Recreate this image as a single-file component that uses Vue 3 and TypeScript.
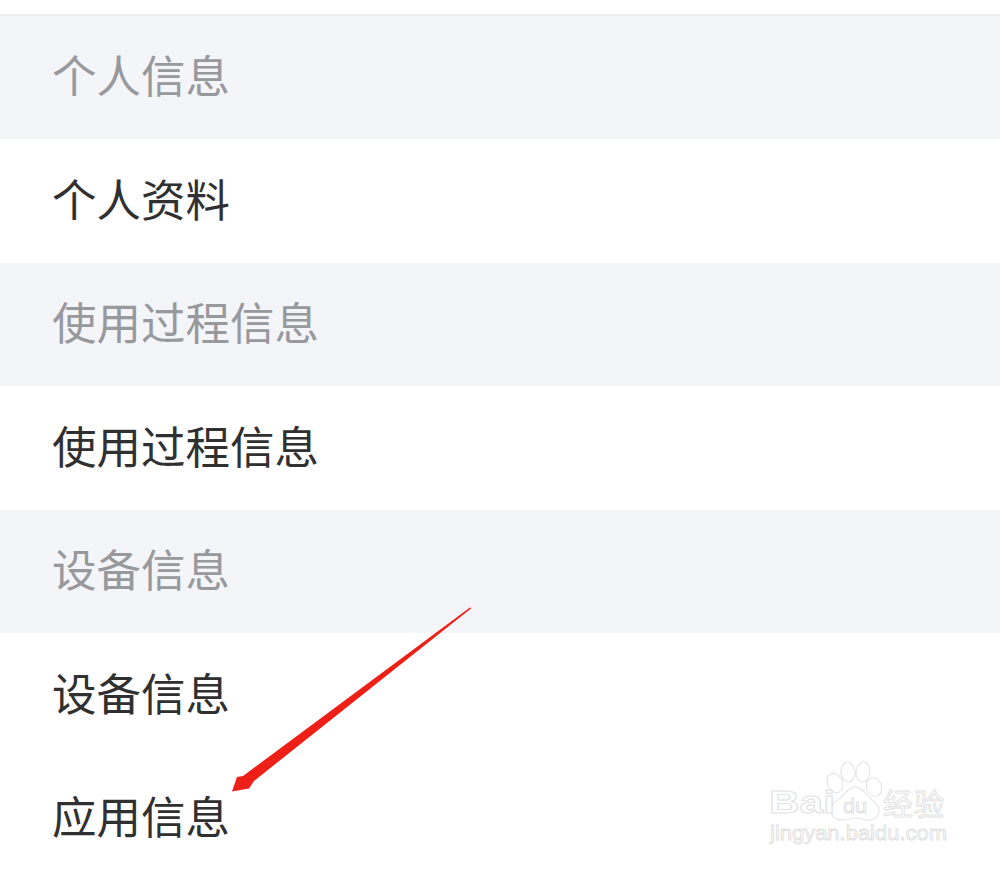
<script setup lang="ts">
interface Section { title: string; items: string[] }
const sections: Section[] = [
  { title: '个人信息', items: ['个人资料'] },
  { title: '使用过程信息', items: ['使用过程信息'] },
  { title: '设备信息', items: ['设备信息', '应用信息'] },
]
</script>

<template>
  <div class="page">
    <div class="top"></div>
    <section v-for="s in sections" :key="s.title">
      <div class="head">{{ s.title }}</div>
      <div v-for="i in s.items" :key="i" class="row">{{ i }}</div>
    </section>

    <svg class="arrow" width="1000" height="871" viewBox="0 0 1000 871">
      <polygon points="470.3,607.3 471,608.5 254,781 249,788.5 232,791.5 237,777 243,776" fill="#ee1f17" />
    </svg>

    <svg class="mark" width="210" height="110" viewBox="0 0 210 110">
      <g fill="#fff" stroke="#e4e4e4" stroke-width="1.1">
        <ellipse cx="85" cy="33" rx="7.5" ry="10" transform="rotate(-25 85 33)" />
        <ellipse cx="98" cy="22" rx="7" ry="10" transform="rotate(-5 98 22)" />
        <ellipse cx="113" cy="22" rx="7" ry="10" transform="rotate(8 113 22)" />
        <ellipse cx="124" cy="37" rx="7.5" ry="9.5" transform="rotate(-20 124 37)" />
        <path d="M105 37c7 0 10 6 15 11 6 5 9 8 9 13 0 6-5 10-12 9-5-1-8-2-12-2-5 0-8 2-13 2-7 0-11-4-11-10 0-5 4-8 9-12 6-4 8-11 15-11z" />
      </g>
      <g class="mark-text">
        <text x="19" y="63" class="bai" textLength="66" lengthAdjust="spacingAndGlyphs">Bai</text>
        <text x="93" y="63" class="du" textLength="24" lengthAdjust="spacingAndGlyphs">du</text>
        <text x="133" y="65" class="cn" textLength="61">经验</text>
        <text x="20" y="90" class="url" textLength="177" lengthAdjust="spacingAndGlyphs">jingyan.baidu.com</text>
      </g>
    </svg>
  </div>
</template>

<style>
html, body { margin: 0; background: #fff; }
</style>

<style scoped>
.page {
  position: relative;
  width: 1000px;
  height: 871px;
  overflow: hidden;
  background: #fff;
  font-family: "Noto Sans CJK SC", "Liberation Sans", sans-serif;
  font-size: 44.5px;
}
.top {
  height: 13.5px;
  border-bottom: 2px solid #eeeef0;
}
.head,
.row {
  box-sizing: border-box;
  display: flex;
  align-items: center;
  height: 123.5px;
  padding-left: 52px;
  padding-bottom: 6px;
  line-height: 1;
}
.head {
  background: #f4f5f9;
  color: #98999d;
}
.row {
  background: #fff;
  color: #303030;
}
.arrow {
  position: absolute;
  left: 0;
  top: 0;
}
.mark {
  position: absolute;
  left: 750px;
  top: 750px;
}
.mark-text text {
  fill: #fff;
  stroke: #e0e0e0;
  stroke-width: 0.9px;
  font-family: "Liberation Sans", "Noto Sans CJK SC", sans-serif;
}
.bai { font-size: 31px; font-weight: 700; }
.du { font-size: 20px; font-weight: 400; }
.mark-text .cn { font-size: 30px; font-family: "Noto Sans CJK SC", sans-serif; }
.url { font-size: 21px; }
</style>
